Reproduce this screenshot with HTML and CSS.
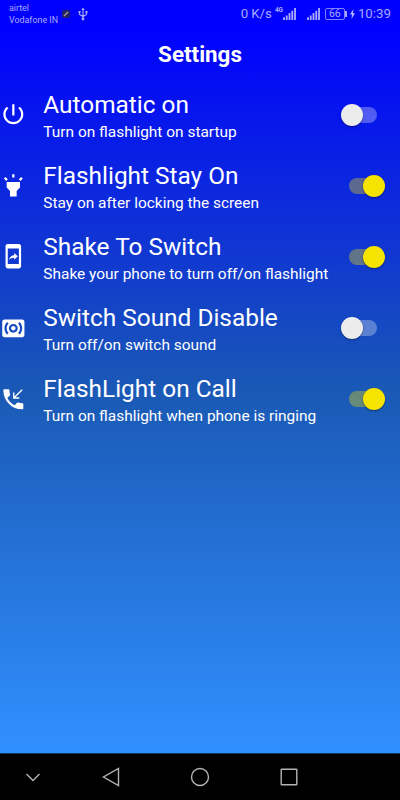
FILE: index.html
```html
<!DOCTYPE html>
<html lang="en">
<head>
    <meta charset="UTF-8">
    <meta name="viewport" content="width=device-width, initial-scale=1.0">
    <title>Settings</title>
    <link rel="stylesheet" href="styles.css">
</head>
<body>
    <div class="screen">
        <div class="status-bar">
            <div class="carrier">
                <span>airtel</span>
                <span>Vodafone IN</span>
            </div>
            <svg class="app-icon" viewBox="0 0 8 8"><rect width="8" height="8" rx="2" fill="#252264"/><path d="M2 6l4-4" stroke="#a59a9a" stroke-width="1.5"/></svg>
            <svg class="usb" viewBox="0 0 10 14" fill="none" stroke="#a9a9ff" stroke-width="1.1"><path d="M5 12V2M1.5 4.5v3L5 9.500l3.500-2v-3"/><path d="M3.300 3L5 .5 6.700 3z" fill="#a9a9ff" stroke="none"/><circle cx="5" cy="12" r="1.4" fill="#a9a9ff" stroke="none"/><path d="M.5 4h2v2h-2zM7.500 4h2v2h-2z" fill="#a9a9ff" stroke="none"/></svg>
            <span class="speed">0 K/s</span>
            <span class="net">4G</span>
            <svg class="signal" viewBox="0 0 14 13" fill="#a9a9ff"><path d="M0 10h2v3H0zM3 8h2v5H3zM6 5.500h2V13H6zM9 3h2v10H9zM12 0h2v13h-2z"/></svg>
            <svg class="signal second" viewBox="0 0 14 13" fill="#a9a9ff"><path d="M0 10h2v3H0zM3 8h2v5H3zM6 5.500h2V13H6zM9 3h2v10H9zM12 0h2v13h-2z"/></svg>
            <span class="battery">66</span>
            <svg class="bolt" viewBox="0 0 5 10" fill="#b5b5ff"><path d="M3.500 0L0 5.600h2L1.500 10 5 4.200H3z"/></svg>
            <span class="clock">10:39</span>
        </div>

        <h1>Settings</h1>

        <ul class="settings">
            <li>
                <svg class="icon" viewBox="0 0 24 24"><path d="M13 3h-2v10h2V3zm4.830 2.170l-1.420 1.420C17.990 7.860 19 9.810 19 12c0 3.870-3.130 7-7 7s-7-3.130-7-7c0-2.190 1.010-4.140 2.580-5.420L6.170 5.170C4.230 6.820 3 9.260 3 12c0 4.970 4.030 9 9 9s9-4.030 9-9c0-2.740-1.230-5.180-3.170-6.830z"/></svg>
                <div class="text">
                    <h2>Automatic on</h2>
                    <p>Turn on flashlight on startup</p>
                </div>
                <div class="switch"></div>
            </li>
            <li>
                <svg class="icon" viewBox="0 0 24 24"><path d="M6 14l3 3v5h6v-5l3-3V9H6zm5-12h2v3h-2zM3.500 5.875L4.914 4.460l2.120 2.122L5.620 7.997zm13.460.710l2.123-2.120 1.414 1.414L18.375 8z"/></svg>
                <div class="text">
                    <h2>Flashlight Stay On</h2>
                    <p>Stay on after locking the screen</p>
                </div>
                <div class="switch on"></div>
            </li>
            <li>
                <svg class="icon" viewBox="0 0 24 24"><path d="M17 1H7c-1.100 0-2 .9-2 2v18c0 1.100.9 2 2 2h10c1.100 0 2-.9 2-2V3c0-1.100-.9-2-2-2zm0 18H7V5h10v14zm-4.200-5.780v1.750l3.200-2.990L12.800 9v1.700c-3.110.430-4.350 2.560-4.800 4.700 1.110-1.500 2.580-2.180 4.800-2.180z"/></svg>
                <div class="text">
                    <h2>Shake To Switch</h2>
                    <p>Shake your phone to turn off/on flashlight</p>
                </div>
                <div class="switch on"></div>
            </li>
            <li>
                <svg class="icon" viewBox="0 0 24 24"><path fill-rule="evenodd" d="M20 4H4c-1.100 0-2 .9-2 2v12c0 1.100.9 2 2 2h16c1.100 0 2-.9 2-2V6c0-1.100-.9-2-2-2zM7.760 16.240l-1.410 1.410C4.780 16.100 4 14.050 4 12c0-2.050.78-4.100 2.340-5.660l1.410 1.410C6.590 8.930 6 10.460 6 12s.59 3.070 1.760 4.240zM12 16c-2.210 0-4-1.790-4-4s1.790-4 4-4 4 1.790 4 4-1.790 4-4 4zm5.660 1.660l-1.410-1.410C17.410 15.070 18 13.540 18 12s-.59-3.070-1.760-4.240l1.410-1.410C19.220 7.900 20 9.950 20 12c0 2.050-.78 4.100-2.340 5.660zM12 10c-1.100 0-2 .9-2 2s.9 2 2 2 2-.9 2-2-.9-2-2-2z"/></svg>
                <div class="text">
                    <h2>Switch Sound Disable</h2>
                    <p>Turn off/on switch sound</p>
                </div>
                <div class="switch"></div>
            </li>
            <li>
                <svg class="icon" viewBox="0 0 24 24"><path d="M20 15.500c-1.250 0-2.450-.2-3.570-.57-.35-.11-.74-.03-1.020.24l-2.200 2.200c-2.830-1.440-5.150-3.750-6.590-6.580l2.200-2.210c.28-.27.36-.66.25-1.010C8.700 6.450 8.500 5.250 8.500 4c0-.55-.45-1-1-1H4c-.55 0-1 .45-1 1 0 9.390 7.610 17 17 17 .55 0 1-.45 1-1v-3.500c0-.55-.45-1-1-1z"/><path d="M20 3.400l-7.600 7.400M12.400 5.800v5h5" fill="none" stroke="#fff" stroke-width="1.200"/></svg>
                <div class="text">
                    <h2>FlashLight on Call</h2>
                    <p>Turn on flashlight when phone is ringing</p>
                </div>
                <div class="switch on"></div>
            </li>
        </ul>

        <div class="nav-bar">
            <svg class="hide" viewBox="0 0 24 24"><path d="M5.500 9l6.500 6.500L18.500 9"/></svg>
            <svg viewBox="0 0 24 24"><path d="M19.500 3.500v17L4.500 12z"/></svg>
            <svg viewBox="0 0 24 24"><circle cx="12" cy="12" r="8.500"/></svg>
            <svg viewBox="0 0 24 24"><rect x="4.200" y="4.200" width="15.600" height="15.600" rx=".5"/></svg>
        </div>
    </div>
</body>
</html>
```

FILE: styles.css
```css
* {
    box-sizing: border-box;
}

body {
    margin: 0;
    font-family: Roboto, sans-serif;
    color: #fff;
    background-color: #000;
}

.screen {
    display: flex;
    flex-direction: column;
    width: 400px;
    height: 800px;
    background: linear-gradient(#00f 26px, #1a59b5 390px, #3090ff 753px);
}

.status-bar {
    display: flex;
    align-items: center;
    height: 27px;
    padding: 0 9px 0 9px;
    color: #a9a9ff;
}

.carrier {
    display: flex;
    flex-direction: column;
    width: 49px;
    font-size: 8.9px;
    line-height: 12px;
    white-space: nowrap;
}

.app-icon {
    width: 8px;
    height: 8px;
    margin-left: 4px;
}

.usb {
    width: 10px;
    height: 14px;
    margin-left: 8px;
}

.speed {
    margin-left: auto;
    font-size: 13.2px;
}

.net {
    align-self: flex-start;
    width: 8px;
    margin: 6px 0 0 3px;
    font-size: 6.5px;
    font-weight: bold;
    line-height: 8px;
}

.signal {
    width: 13px;
    height: 12px;
}

.second {
    margin-left: 11px;
}

.battery {
    position: relative;
    width: 20px;
    height: 12px;
    margin-left: 5px;
    border: 1px solid #8080ff;
    border-radius: 2px;
    font-size: 10.5px;
    line-height: 10px;
    text-align: center;
}

.battery::after {
    content: "";
    position: absolute;
    right: -3px;
    top: 2px;
    width: 2px;
    height: 6px;
    background-color: #a9a9ff;
}

.bolt {
    width: 5px;
    height: 10px;
    margin-left: 5px;
}

.clock {
    margin-left: 3px;
    font-size: 13.3px;
}

h1 {
    margin: 0;
    height: 52px;
    font-size: 22.4px;
    line-height: 55px;
    text-align: center;
}

.settings {
    flex: 1;
    margin: 0;
    padding: 0;
    list-style: none;
}

li {
    display: flex;
    align-items: center;
    height: 71.1px;
    padding-right: 14px;
}

.icon {
    width: 26.67px;
    height: 26.67px;
    fill: #fff;
}

.text {
    flex: 1;
    margin-left: 16.67px;
    padding-top: 7px;
    white-space: nowrap;
}

h2 {
    margin: 0;
    font-size: 24.4px;
    font-weight: normal;
    line-height: 28px;
}

p {
    margin: 0;
    font-size: 15.45px;
    line-height: 27px;
}

.switch {
    position: relative;
    width: 28px;
    height: 16px;
    margin-right: 9px;
    border-radius: 8px;
    background-color: rgba(255, 255, 255, 0.3);
}

.switch::before {
    content: "";
    position: absolute;
    left: -8.5px;
    top: -3px;
    width: 22.2px;
    height: 22.2px;
    border-radius: 50%;
    background-color: #ececec;
    box-shadow: 0 1px 2px rgba(0, 0, 0, 0.4);
}

.switch.on {
    background-color: rgba(245, 228, 0, 0.35);
}

.switch.on::before {
    left: 14px;
    background-color: #f5e400;
}

.nav-bar {
    display: flex;
    height: 47px;
    padding-left: 21px;
    border-top: 1px solid #10335c;
    background-color: #000;
}

.nav-bar svg {
    width: 24px;
    height: 24px;
    margin: 11px 65px 0 0;
    fill: none;
    stroke: #b4b4b4;
    stroke-width: 1.4;
}

.nav-bar .hide {
    margin-right: 54px;
}
```
